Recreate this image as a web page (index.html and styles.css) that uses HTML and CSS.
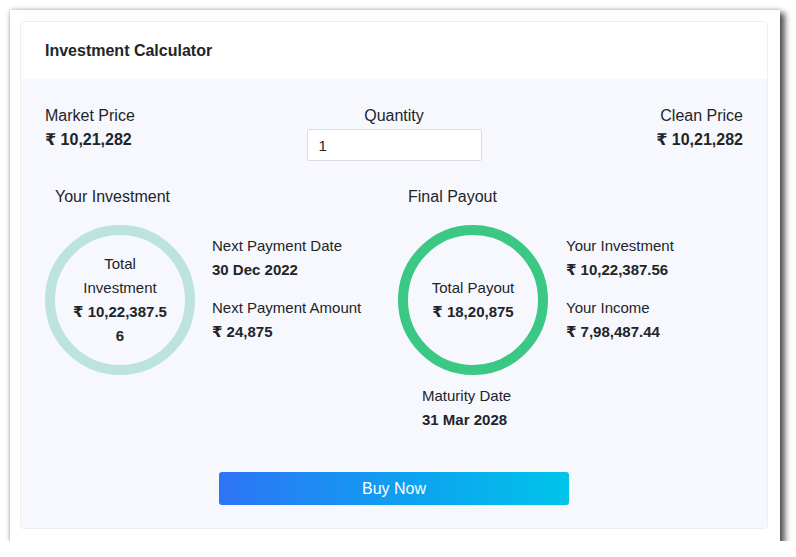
FILE: index.html
```html
<!DOCTYPE html>
<html>
<head>
<meta charset="utf-8">
<link rel="stylesheet" href="styles.css">
</head>
<body>
<div class="frame">
  <div class="card">
    <div class="card-header">Investment Calculator</div>
    <div class="card-body">
      <div class="top-row">
        <div class="stat">
          <div class="label">Market Price</div>
          <div class="value">₹ 10,21,282</div>
        </div>
        <div class="stat center">
          <div class="label">Quantity</div>
          <input class="qty" type="text" value="1">
        </div>
        <div class="stat right">
          <div class="label">Clean Price</div>
          <div class="value">₹ 10,21,282</div>
        </div>
      </div>
      <div class="charts">
        <div class="col">
          <div class="col-title">Your Investment</div>
          <div class="col-main">
            <div class="ring ring-light">
              <div class="ring-text">
                <div>Total Investment</div>
                <div class="b">₹&nbsp;10,22,387.56</div>
              </div>
            </div>
            <div class="details">
              <div class="item">
                <div>Next Payment Date</div>
                <div class="b">30 Dec 2022</div>
              </div>
              <div class="item">
                <div>Next Payment Amount</div>
                <div class="b">₹ 24,875</div>
              </div>
            </div>
          </div>
        </div>
        <div class="col col-right">
          <div class="col-title">Final Payout</div>
          <div class="col-main">
            <div class="ring-wrap">
              <div class="ring ring-green">
                <div class="ring-text">
                  <div>Total Payout</div>
                  <div class="b">₹ 18,20,875</div>
                </div>
              </div>
              <div class="maturity">
                <div>Maturity Date</div>
                <div class="b">31 Mar 2028</div>
              </div>
            </div>
            <div class="details">
              <div class="item">
                <div>Your Investment</div>
                <div class="b">₹ 10,22,387.56</div>
              </div>
              <div class="item">
                <div>Your Income</div>
                <div class="b">₹ 7,98,487.44</div>
              </div>
            </div>
          </div>
        </div>
      </div>
      <div class="actions">
        <button class="buy">Buy Now</button>
      </div>
    </div>
  </div>
</div>
</body>
</html>
```

FILE: styles.css
```css
* { box-sizing: border-box; }
html, body { margin: 0; padding: 0; background: #fff; }
body {
  font-family: "Liberation Sans", Arial, "DejaVu Sans", sans-serif;
  color: #212529;
}
.frame {
  margin: 10px 0 0 10px;
  width: 770px;
  height: 531px;
  padding: 11px 12px 12px 10px;
  background: #fff;
  box-shadow: 4px 4px 6px 1px rgba(0,0,0,0.65), 0 0 4px rgba(0,0,0,0.25);
}
.card {
  border: 1px solid #eeeef2;
  border-radius: 4px;
  overflow: hidden;
  height: 508px;
  display: flex;
  flex-direction: column;
}
.card-header {
  background: #fff;
  height: 57px;
  padding: 0 24px;
  display: flex;
  align-items: center;
  font-weight: bold;
  font-size: 16px;
}
.card-body {
  flex: 1;
  background: #f7f8fe;
  padding: 25px 24px 0 24px;
}
.top-row {
  display: grid;
  grid-template-columns: 1fr auto 1fr;
  align-items: start;
}
.stat { display: flex; flex-direction: column; font-size: 16px; line-height: 24px; }
.stat.center { align-items: center; }
.stat.right { align-items: flex-end; }
.label { font-size: 16px; }
.value { font-weight: bold; font-size: 16px; }
.qty {
  margin-top: 1px;
  width: 175px;
  height: 32px;
  border: 1px solid #dcdce0;
  border-radius: 2px;
  background: #fff;
  padding: 0 11px;
  font-family: "Liberation Sans", Arial, sans-serif;
  font-size: 15px;
  color: #212529;
  outline: none;
}
.charts {
  display: grid;
  grid-template-columns: 353px 1fr;
  margin-top: 24px;
  font-size: 15px;
  line-height: 24px;
}
.col-title { padding-left: 10px; font-size: 16px; line-height: 24px; }
.col-main {
  display: flex;
  align-items: flex-start;
  gap: 17px;
  margin-top: 16px;
}
.col-right .col-main { gap: 18px; }
.ring {
  width: 150px;
  height: 150px;
  border-radius: 50%;
  border: 10px solid #bde3e0;
  display: flex;
  align-items: center;
  justify-content: center;
  text-align: center;
  flex-shrink: 0;
}
.ring-green { border-color: #3ac884; }
.ring-text { width: 100px; }
.ring-light .ring-text { width: 96px; overflow-wrap: anywhere; }
.b { font-weight: bold; }
.details { margin-top: 9px; display: flex; flex-direction: column; gap: 14px; }
.maturity { margin-top: 9px; padding-left: 24px; }
.actions {
  display: flex;
  justify-content: center;
  margin-top: 40px;
}
.buy {
  width: 350px;
  height: 33px;
  border: none;
  border-radius: 3px;
  background: linear-gradient(90deg, #2e74f6 0%, #0da2f0 55%, #00c4ea 100%);
  color: #fff;
  font-family: "Liberation Sans", Arial, sans-serif;
  font-size: 16px;
}
```
